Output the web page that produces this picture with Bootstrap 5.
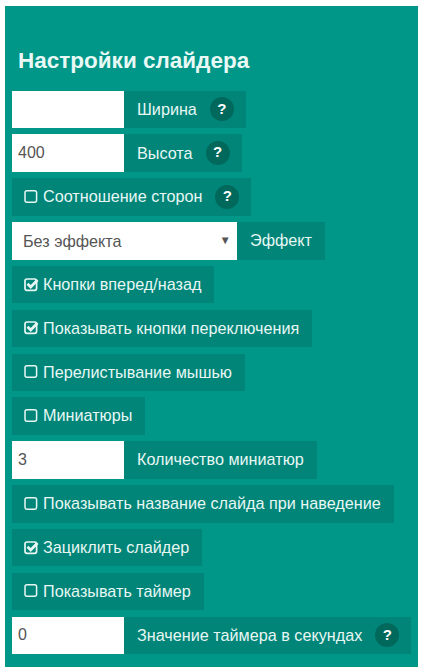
<!DOCTYPE html>
<html lang="ru">
<head>
<meta charset="utf-8">
<title>Настройки слайдера</title>
<link rel="stylesheet" href="https://cdn.jsdelivr.net/npm/bootstrap@5.3.0/dist/css/bootstrap.min.css">
<style>
html,body{background:#fff;margin:0;font-family:"Liberation Sans",Arial,sans-serif;font-size:16.2px;}
.sett-panel{margin:6px 5px 0;height:661px;background:#009688;padding:42px 7px 0;color:#e8f7f4;}
.sett-title{font:700 22.5px/26px "Liberation Sans",sans-serif;margin:0 0 16.6px 6px;color:#e9f9f6;}
.sett-row{height:37.5px;margin-bottom:6.33px;align-items:center;}
.sett-field{width:112px;height:37.5px;flex:none;background:#fff;border:0;border-radius:0;padding:0 6px;font:16px "Liberation Sans",sans-serif;color:#555;box-shadow:none;}
.sett-select{width:225px;height:37.5px;flex:none;background:#fff;padding:0 6px 0 11px;color:#555;font-size:16.2px;}
.sett-arrow{font-size:11.5px;color:#555;}
.sett-label{height:37.5px;background:rgba(0,96,84,.3);padding:0 13px 1px;white-space:nowrap;color:#e8f7f4;}
.sett-check{padding-left:12px;}
.sett-q{width:24px;height:24px;border-radius:50%;background:#00695c;color:#fff;font-weight:700;font-size:15px;margin-left:13px;margin-right:-1px;}
.sett-box{width:15px;height:15px;flex:none;margin-right:4px;}
</style>
</head>
<body>
<div class="sett-panel">
  <h1 class="sett-title">Настройки слайдера</h1>

  <div class="sett-row d-flex"><input class="sett-field form-control" type="text" value=""><div class="sett-label d-flex align-items-center">Ширина<span class="sett-q d-flex align-items-center justify-content-center">?</span></div></div>
  <div class="sett-row d-flex"><input class="sett-field form-control" type="text" value="400"><div class="sett-label d-flex align-items-center">Высота<span class="sett-q d-flex align-items-center justify-content-center">?</span></div></div>
  <div class="sett-row d-flex"><div class="sett-label sett-check d-flex align-items-center"><svg class="sett-box" viewBox="0 0 15 15"><rect x="1" y="1.700" width="11.600" height="11.600" rx="2" fill="none" stroke="#e8f7f4" stroke-width="1.500"/></svg>Соотношение сторон<span class="sett-q d-flex align-items-center justify-content-center">?</span></div></div>
  <div class="sett-row d-flex"><div class="sett-select d-flex align-items-center justify-content-between"><span>Без эффекта</span><span class="sett-arrow">▼</span></div><div class="sett-label d-flex align-items-center">Эффект</div></div>
  <div class="sett-row d-flex"><div class="sett-label sett-check d-flex align-items-center"><svg class="sett-box" viewBox="0 0 15 15"><rect x="1" y="2" width="11.600" height="11.300" rx="2" fill="none" stroke="#e8f7f4" stroke-width="1.700"/><path d="M3.500 6.700l3.200 3.200L13.500 3" fill="none" stroke="#e8f7f4" stroke-width="2.800"/></svg>Кнопки вперед/назад</div></div>
  <div class="sett-row d-flex"><div class="sett-label sett-check d-flex align-items-center"><svg class="sett-box" viewBox="0 0 15 15"><rect x="1" y="2" width="11.600" height="11.300" rx="2" fill="none" stroke="#e8f7f4" stroke-width="1.700"/><path d="M3.500 6.700l3.200 3.200L13.500 3" fill="none" stroke="#e8f7f4" stroke-width="2.800"/></svg>Показывать кнопки переключения</div></div>
  <div class="sett-row d-flex"><div class="sett-label sett-check d-flex align-items-center"><svg class="sett-box" viewBox="0 0 15 15"><rect x="1" y="1.700" width="11.600" height="11.600" rx="2" fill="none" stroke="#e8f7f4" stroke-width="1.500"/></svg>Перелистывание мышью</div></div>
  <div class="sett-row d-flex"><div class="sett-label sett-check d-flex align-items-center"><svg class="sett-box" viewBox="0 0 15 15"><rect x="1" y="1.700" width="11.600" height="11.600" rx="2" fill="none" stroke="#e8f7f4" stroke-width="1.500"/></svg>Миниатюры</div></div>
  <div class="sett-row d-flex"><input class="sett-field form-control" type="text" value="3"><div class="sett-label d-flex align-items-center">Количество миниатюр</div></div>
  <div class="sett-row d-flex"><div class="sett-label sett-check d-flex align-items-center"><svg class="sett-box" viewBox="0 0 15 15"><rect x="1" y="1.700" width="11.600" height="11.600" rx="2" fill="none" stroke="#e8f7f4" stroke-width="1.500"/></svg>Показывать название слайда при наведение</div></div>
  <div class="sett-row d-flex"><div class="sett-label sett-check d-flex align-items-center"><svg class="sett-box" viewBox="0 0 15 15"><rect x="1" y="2" width="11.600" height="11.300" rx="2" fill="none" stroke="#e8f7f4" stroke-width="1.700"/><path d="M3.500 6.700l3.200 3.200L13.500 3" fill="none" stroke="#e8f7f4" stroke-width="2.800"/></svg>Зациклить слайдер</div></div>
  <div class="sett-row d-flex"><div class="sett-label sett-check d-flex align-items-center"><svg class="sett-box" viewBox="0 0 15 15"><rect x="1" y="1.700" width="11.600" height="11.600" rx="2" fill="none" stroke="#e8f7f4" stroke-width="1.500"/></svg>Показывать таймер</div></div>
  <div class="sett-row d-flex"><input class="sett-field form-control" type="text" value="0"><div class="sett-label d-flex align-items-center">Значение таймера в секундах<span class="sett-q d-flex align-items-center justify-content-center">?</span></div></div>
</div>
<script src="https://cdn.jsdelivr.net/npm/bootstrap@5.3.0/dist/js/bootstrap.bundle.min.js"></script>
</body>
</html>
